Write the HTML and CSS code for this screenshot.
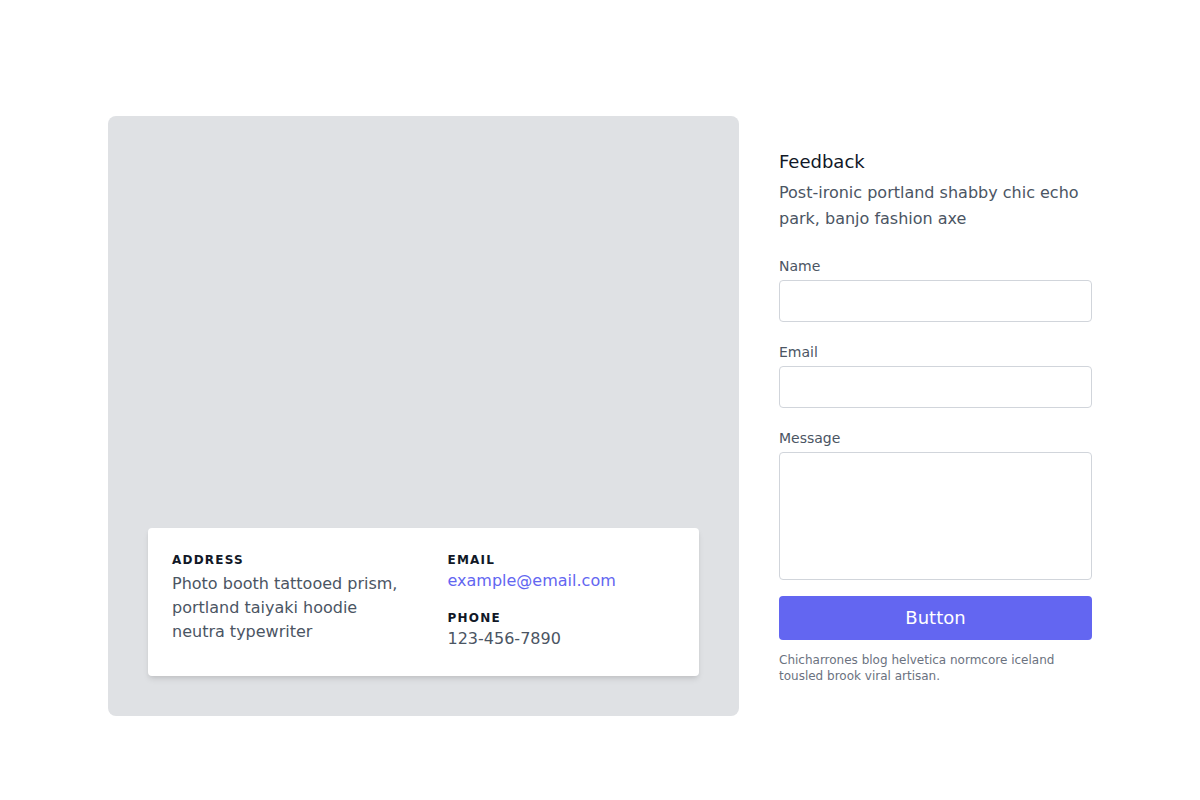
FILE: index.html
```html
<!DOCTYPE html>
<html lang="en">
<head>
<meta charset="utf-8">
<title>Contact</title>
<link rel="stylesheet" href="styles.css">
</head>
<body>
<section class="contact">
  <div class="container">
    <div class="map-panel">
      <div class="info-card">
        <div class="info-col">
          <h2 class="info-title">ADDRESS</h2>
          <p class="info-address">Photo booth tattooed prism, portland taiyaki hoodie neutra typewriter</p>
        </div>
        <div class="info-col">
          <h2 class="info-title">EMAIL</h2>
          <a class="info-link">example@email.com</a>
          <h2 class="info-title info-title-spaced">PHONE</h2>
          <p class="info-phone">123-456-7890</p>
        </div>
      </div>
    </div>
    <div class="form-panel">
      <h2 class="form-title">Feedback</h2>
      <p class="form-desc">Post-ironic portland shabby chic echo park, banjo fashion axe</p>
      <div class="field">
        <label class="field-label" for="name">Name</label>
        <input class="field-input" type="text" id="name">
      </div>
      <div class="field">
        <label class="field-label" for="email">Email</label>
        <input class="field-input" type="email" id="email">
      </div>
      <div class="field">
        <label class="field-label" for="message">Message</label>
        <textarea class="field-textarea" id="message"></textarea>
      </div>
      <button class="submit-btn">Button</button>
      <p class="form-note">Chicharrones blog helvetica normcore iceland tousled brook viral artisan.</p>
    </div>
  </div>
</section>
</body>
</html>
```

FILE: styles.css
```css
* {
  box-sizing: border-box;
}

body {
  margin: 0;
  background: #ffffff;
  font-family: "DejaVu Sans", sans-serif;
  color: #4b5563;
}

h2, p {
  margin: 0;
}

.contact {
  padding: 116px 0 84px;
}

.container {
  width: 984px;
  margin: 0 auto;
  display: flex;
  align-items: stretch;
}

.map-panel {
  width: 631px;
  flex-shrink: 0;
  margin-right: 40px;
  background: #dfe1e4;
  border-radius: 8px;
  padding: 40px;
  display: flex;
  align-items: flex-end;
  justify-content: flex-start;
}

.info-card {
  width: 100%;
  background: #ffffff;
  border-radius: 4px;
  padding: 24px 0;
  display: flex;
  box-shadow: 0 4px 6px -1px rgba(0, 0, 0, 0.1), 0 2px 4px -1px rgba(0, 0, 0, 0.06);
}

.info-col {
  width: 50%;
  padding: 0 24px;
}

.info-title {
  font-size: 12px;
  line-height: 16px;
  font-weight: 700;
  letter-spacing: 0.1em;
  color: #111827;
}

.info-title-spaced {
  margin-top: 16px;
}

.info-address {
  margin-top: 4px;
  font-size: 16px;
  line-height: 24px;
  color: #4b5563;
}

.info-link {
  display: block;
  font-size: 16px;
  line-height: 26px;
  color: #6366f1;
  text-decoration: none;
}

.info-phone {
  font-size: 16px;
  line-height: 26px;
  color: #4b5563;
}

.form-panel {
  width: 313px;
  flex-shrink: 0;
  padding: 32px 0;
  display: flex;
  flex-direction: column;
}

.form-title {
  font-size: 18px;
  line-height: 28px;
  font-weight: 400;
  color: #111827;
  margin-bottom: 4px;
}

.form-desc {
  font-size: 16px;
  line-height: 26px;
  color: #4b5563;
  margin-bottom: 20px;
}

.field {
  margin-bottom: 16px;
}

.field-label {
  display: block;
  font-size: 14px;
  line-height: 28px;
  color: #4b5563;
}

.field-input,
.field-textarea {
  display: block;
  width: 100%;
  background: #ffffff;
  border: 1px solid #d1d5db;
  border-radius: 4px;
  font-family: inherit;
  font-size: 16px;
  color: #374151;
  padding: 4px 12px;
  outline: none;
}

.field-input {
  height: 42px;
  line-height: 32px;
}

.field-textarea {
  height: 128px;
  resize: none;
  line-height: 24px;
}

.submit-btn {
  display: block;
  width: 100%;
  height: 44px;
  border: 0;
  border-radius: 4px;
  background: #6366f1;
  color: #ffffff;
  font-family: inherit;
  font-size: 18px;
  line-height: 28px;
  padding: 8px 24px;
}

.form-note {
  margin-top: 12px;
  font-size: 12px;
  line-height: 16px;
  color: #6b7280;
}
```
